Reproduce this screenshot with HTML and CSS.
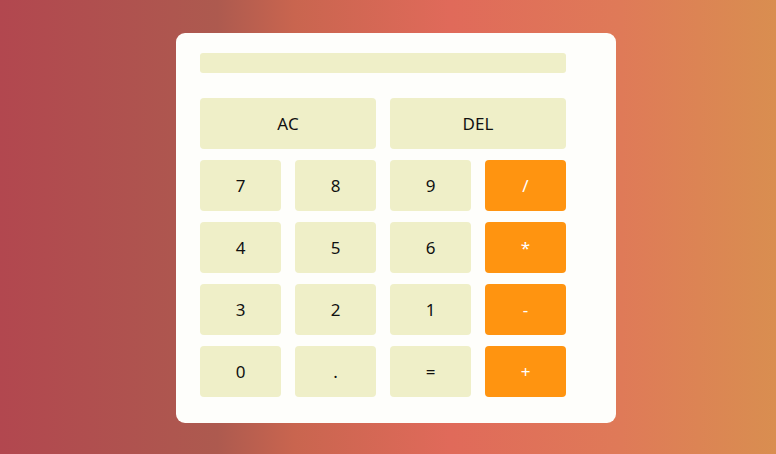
FILE: index.html
```html
<!DOCTYPE html>
<html>
<head>
<meta charset="utf-8">
<link rel="stylesheet" href="styles.css">
</head>
<body>
<div class="card">
  <div class="display"></div>
  <div class="keys">
    <button class="key wide">AC</button>
    <button class="key wide">DEL</button>
    <button class="key">7</button>
    <button class="key">8</button>
    <button class="key">9</button>
    <button class="key op">/</button>
    <button class="key">4</button>
    <button class="key">5</button>
    <button class="key">6</button>
    <button class="key op">*</button>
    <button class="key">3</button>
    <button class="key">2</button>
    <button class="key">1</button>
    <button class="key op">-</button>
    <button class="key">0</button>
    <button class="key">.</button>
    <button class="key">=</button>
    <button class="key op">+</button>
  </div>
</div>
</body>
</html>
```
FILE: styles.css
```css
html, body {
  margin: 0;
  height: 100%;
}
body {
  background: linear-gradient(to right, #b2474f 0%, #ad5a4f 28%, #c9654f 38%, #e06a5a 58%, #df7a58 80%, #d98e50 100%);
  display: flex;
  justify-content: center;
  align-items: flex-start;
  font-family: "Noto Sans", "Open Sans", sans-serif;
}
.card {
  margin-top: 33px;
  margin-left: 16px;
  width: 440px;
  height: 390px;
  box-sizing: border-box;
  background: #fefefb;
  border-radius: 9px;
  padding: 20px 50px 26px 24px;
}
.display {
  height: 20px;
  width: 366px;
  background: #efefc8;
  border-radius: 3px;
}
.keys {
  margin-top: 25px;
  display: grid;
  grid-template-columns: repeat(4, 81px);
  grid-auto-rows: 51px;
  column-gap: 14px;
  row-gap: 11px;
}
.key {
  border: none;
  border-radius: 4px;
  background: #efefc8;
  font-family: "Noto Sans", "Open Sans", sans-serif;
  font-size: 17px;
  color: #111;
  padding: 0;
}
.wide {
  grid-column: span 2;
}
.op {
  background: #ff9410;
  color: #fff;
}
```
